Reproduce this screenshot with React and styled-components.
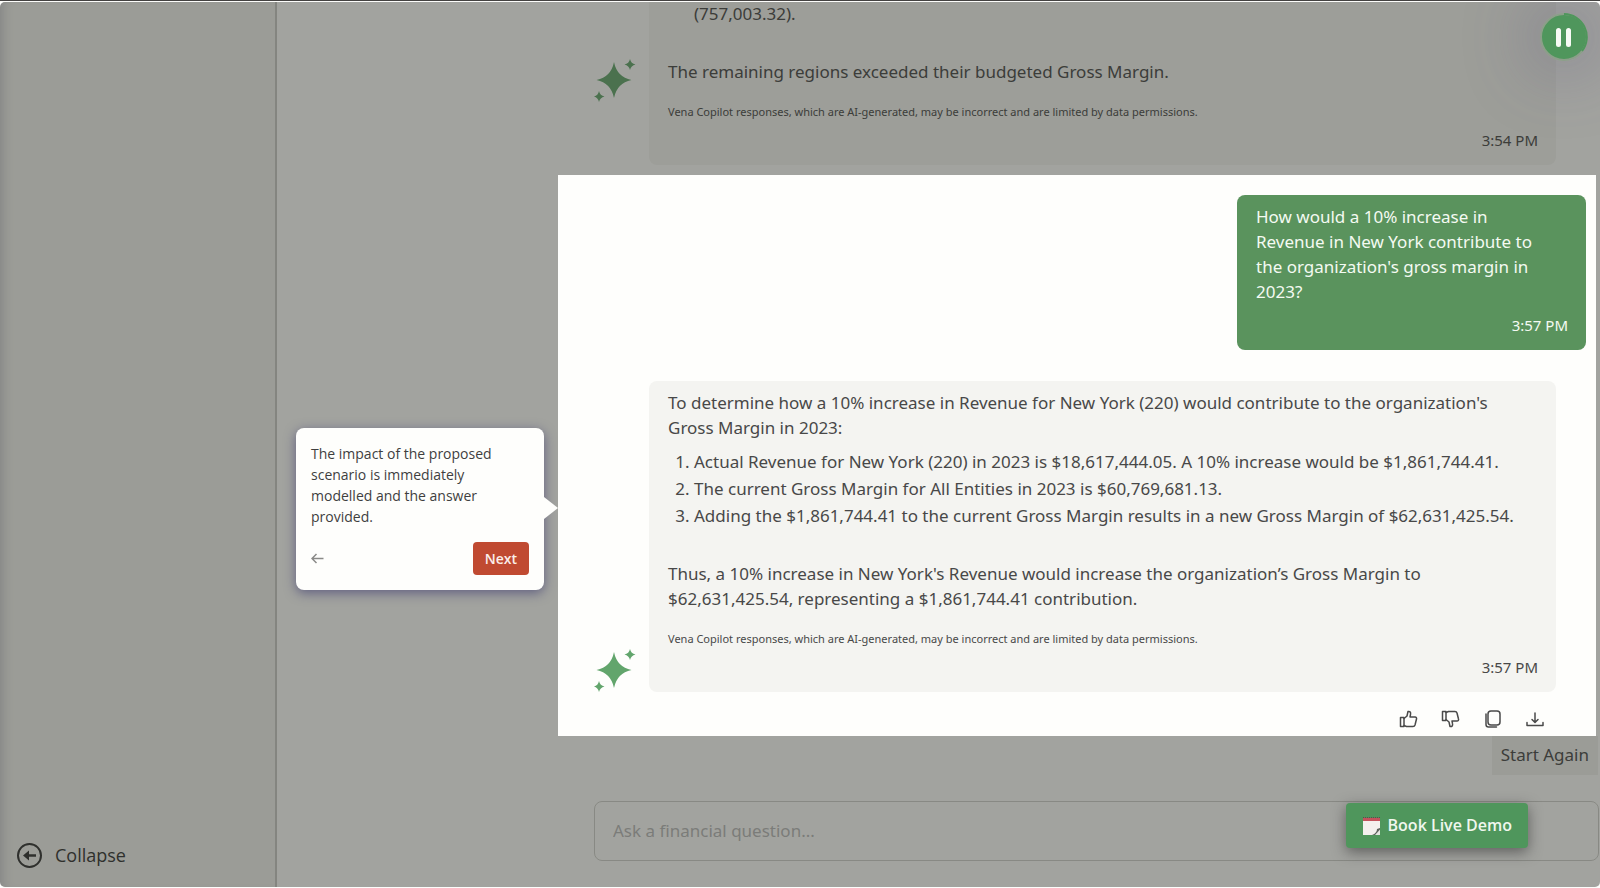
import React, { useState } from "react";
import styled, { createGlobalStyle } from "styled-components";

const GlobalStyle = createGlobalStyle`
  * {
    box-sizing: border-box;
  }
  body {
    margin: 0;
    background: #fdfdfb;
    font-family: "Open Sans", "Noto Sans", sans-serif;
    font-size: 18px;
    line-height: 25px;
    color: #484848;
  }
  button, input {
    font: inherit;
    color: inherit;
  }
  button {
    cursor: pointer;
  }
  p, ol {
    margin: 0;
  }
`;

const Page = styled.div`
  height: 100vh;
  padding: 1px 0;
  border-top: 1px solid #444241;
`;

const Frame = styled.div`
  position: relative;
  display: flex;
  height: 100%;
  overflow: hidden;
  border-radius: 5px;
  background: #fefefc;
`;

const Sidebar = styled.aside`
  display: flex;
  flex: 0 0 277px;
  flex-direction: column;
  justify-content: flex-end;
  padding: 18px 16px;
  background: #f1f1ed;
  border-right: 2px solid #c8c8c4;
  box-shadow: inset 10px 0 12px -8px rgb(90, 90, 120, 0.3);
`;

const CollapseButton = styled.button`
  display: flex;
  align-items: center;
  gap: 12px;
  align-self: flex-start;
  padding: 0;
  border: none;
  background: none;
  color: #303030;
`;

const Main = styled.main`
  display: flex;
  flex: 1;
  flex-direction: column;
  justify-content: flex-end;
  min-width: 0;
  padding-left: 281px;
  font-family: "Noto Sans", "Open Sans", sans-serif;
  font-size: 17px;
`;

const Row = styled.div`
  display: flex;
  align-items: flex-end;
  gap: 12px;
  padding: 0 40px 0 36px;
`;

// the row above the spotlight has no 4px margin of its own
const EarlierRow = styled(Row)`
  padding-right: 44px;
`;

const Avatar = styled.svg`
  flex: 0 0 43px;
  height: 43px;
  margin-bottom: ${(p) => p.$lift || 0}px;
  fill: #62a56c;
`;

const Bubble = styled.article`
  display: flex;
  flex: 1;
  flex-direction: column;
  min-width: 0;
  padding: 9px 18px 14px 19px;
  border-radius: 8px;
  background: #f4f4f1;
`;

const Question = styled(Bubble)`
  flex: 0 0 349px;
  background: #5a935d;
  color: #f4faf2;
`;

const Paragraph = styled.p`
  padding-right: 20px;
`;

const Steps = styled.ol`
  display: flex;
  flex-direction: column;
  gap: 2px;
  margin: 9px 0 33px;
  padding-left: 26px;
`;

const Disclaimer = styled.p`
  margin-top: 20px;
  font-size: 11px;
  line-height: 15px;
`;

const Time = styled.time`
  align-self: flex-end;
  margin-top: 10px;
  font-size: 15px;
  line-height: 22px;
`;

// everything outside of the spotlight is dimmed by its spread shadow
const Spotlight = styled.section`
  position: relative;
  z-index: 1;
  display: flex;
  flex-direction: column;
  margin: 10px 4px 0 0;
  padding: 20px 0 7px;
  background: #fefefc;
  box-shadow: 0 0 0 3000px rgb(45, 47, 40, 0.44);
`;

const QuestionRow = styled.div`
  display: flex;
  justify-content: flex-end;
  margin-bottom: 31px;
  padding-right: 10px;
`;

const Actions = styled.div`
  display: flex;
  justify-content: flex-end;
  gap: 22px;
  margin-top: 17px;
  padding-right: 51px;
`;

const IconButton = styled.button`
  display: flex;
  padding: 0;
  border: none;
  background: none;
`;

const Icon = styled.svg`
  width: 20px;
  height: 20px;
  fill: none;
  stroke: #4a4a4a;
  stroke-width: 1.5;
  stroke-linejoin: round;
  stroke-linecap: round;
`;

const Tooltip = styled.div`
  position: absolute;
  top: 253px;
  right: calc(100% + 14px);
  width: 248px;
  padding: 15px;
  border-radius: 8px;
  background: #fefefc;
  color: #3f3f3f;
  font-family: "Open Sans", "Noto Sans", sans-serif;
  font-size: 14px;
  line-height: 21px;
  box-shadow: 0 3px 12px rgb(60, 58, 110, 0.65);
  &::after {
    content: "";
    position: absolute;
    top: 69px;
    left: 100%;
    border: 11px solid transparent;
    border-left: 14px solid #fefefc;
    border-right: none;
  }
`;

const TooltipFooter = styled.div`
  display: flex;
  align-items: center;
  justify-content: space-between;
  margin-top: 15px;
`;

const NextButton = styled.button`
  height: 33px;
  padding: 0 12px;
  border: none;
  border-radius: 4px;
  background: #c04a31;
  color: #fbeeea;
  font-weight: 600;
`;

const StartAgain = styled.button`
  flex: 0 0 39px;
  align-self: flex-end;
  margin-right: 2px;
  padding: 0 9px 2px;
  border: none;
  background: #f1f1ed;
`;

const AskInput = styled.input`
  flex: 0 0 60px;
  margin: 26px 1px 26px 36px;
  padding: 0 18px 2px;
  border: 1px solid #cfcfcb;
  border-radius: 8px;
  background: transparent;
  &::placeholder {
    color: #b8b8b8;
    opacity: 1;
  }
`;

const DemoButton = styled.button`
  position: absolute;
  right: 72px;
  bottom: 39px;
  z-index: 2;
  display: flex;
  align-items: center;
  gap: 7px;
  height: 45px;
  padding: 0 16px;
  border: none;
  border-radius: 4px;
  background: #4f965c;
  color: #f0f7ee;
  font-size: 16px;
  font-weight: 600;
  box-shadow: 0 4px 14px rgb(50, 50, 50, 0.6);
`;

const PauseButton = styled.button`
  position: absolute;
  top: 11px;
  right: 12px;
  z-index: 2;
  display: flex;
  padding: 0;
  border: none;
  border-radius: 50%;
  background: none;
  box-shadow: 0 0 70px 8px rgb(80, 72, 120, 0.4);
`;

function Sparkles({ lift }) {
  return (
    <Avatar viewBox="0 0 43 43" $lift={lift} aria-hidden="true">
      <path d="M20 3Q23 18 37.500 21Q23 24 20 39Q17 24 2.500 21Q17 18 20 3Z" />
      <path d="M36 0Q37 4.500 41.500 5.500Q37 6.500 36 11Q35 6.500 30.500 5.500Q35 4.500 36 0Z" />
      <path d="M5 32Q6 36.500 10.500 37.500Q6 38.500 5 43Q4 38.500 0 37.500Q4 36.500 5 32Z" />
    </Avatar>
  );
}

function ThumbIcon({ down }) {
  return (
    <Icon viewBox="0 0 20 20">
      <g transform={down ? "matrix(1 0 0 -1 0 20)" : undefined}>
        <path d="M1.500 8.500H5V17.500H1.500Z" />
        <path d="M5 9.500L8 7L9 2.500C11 2 12 3.500 11.500 5.500L11 8H16C17.300 8 17.800 9 17.500 10L16 16C15.700 17 15 17.500 14 17.500H7.500L5 16.500" />
      </g>
    </Icon>
  );
}

const note =
  "Vena Copilot responses, which are AI-generated, may be incorrect and are limited by data permissions.";

function App() {
  const [question, setQuestion] = useState("");

  return (
    <Page>
      <GlobalStyle />
      <Frame>
        <Sidebar>
          <CollapseButton>
            <svg width="27" height="27" viewBox="0 0 27 27" fill="none" stroke="#303030">
              <circle cx="13.500" cy="13.500" r="11.500" strokeWidth="2" />
              <path d="M20 13.500H11" strokeWidth="2.500" />
              <path d="M7 13.500L13 8.500V18.500Z" fill="#303030" stroke="none" />
            </svg>
            Collapse
          </CollapseButton>
        </Sidebar>
        <Main>
          <EarlierRow>
            <Sparkles lift={63} />
            <Bubble>
              <Steps as="div">
                <p>(757,003.32).</p>
              </Steps>
              <Paragraph>The remaining regions exceeded their budgeted Gross Margin.</Paragraph>
              <Disclaimer>{note}</Disclaimer>
              <Time>3:54 PM</Time>
            </Bubble>
          </EarlierRow>
          <Spotlight>
            <QuestionRow>
              <Question>
                <Paragraph>
                  How would a 10% increase in Revenue in New York contribute to the
                  organization's gross margin in 2023?
                </Paragraph>
                <Time>3:57 PM</Time>
              </Question>
            </QuestionRow>
            <Row>
              <Sparkles />
              <Bubble>
                <Paragraph>
                  To determine how a 10% increase in Revenue for New York (220) would
                  contribute to the organization's Gross Margin in 2023:
                </Paragraph>
                <Steps>
                  <li>
                    Actual Revenue for New York (220) in 2023 is $18,617,444.05. A 10%
                    increase would be $1,861,744.41.
                  </li>
                  <li>The current Gross Margin for All Entities in 2023 is $60,769,681.13.</li>
                  <li>
                    Adding the $1,861,744.41 to the current Gross Margin results in a new
                    Gross Margin of $62,631,425.54.
                  </li>
                </Steps>
                <Paragraph>
                  Thus, a 10% increase in New York's Revenue would increase the
                  organization’s Gross Margin to $62,631,425.54, representing a
                  $1,861,744.41 contribution.
                </Paragraph>
                <Disclaimer>{note}</Disclaimer>
                <Time>3:57 PM</Time>
              </Bubble>
            </Row>
            <Actions>
              <IconButton aria-label="Like">
                <ThumbIcon />
              </IconButton>
              <IconButton aria-label="Dislike">
                <ThumbIcon down />
              </IconButton>
              <IconButton aria-label="Copy">
                <Icon viewBox="0 0 20 20">
                  <rect x="5" y="2" width="12" height="14" rx="3" />
                  <path d="M3 5V15.500Q3 18 5.500 18H13.500" />
                </Icon>
              </IconButton>
              <IconButton aria-label="Download">
                <Icon viewBox="0 0 20 20">
                  <path d="M10 4V13M7 10.500L10 13.500L13 10.500M2 13.500V16.500H18V13.500" />
                </Icon>
              </IconButton>
            </Actions>
            <Tooltip role="dialog" aria-label="Tour step">
              <Paragraph>
                The impact of the proposed scenario is immediately modelled and the answer
                provided.
              </Paragraph>
              <TooltipFooter>
                <IconButton aria-label="Back">
                  <svg width="13" height="13" viewBox="0 0 13 13" fill="none" stroke="#8a8a88" strokeWidth="1.500">
                    <path d="M12.500 6.500H1M5.500 2L1 6.500L5.500 11" />
                  </svg>
                </IconButton>
                <NextButton>Next</NextButton>
              </TooltipFooter>
            </Tooltip>
          </Spotlight>
          <StartAgain>Start Again</StartAgain>
          <AskInput
            aria-label="Ask a financial question"
            placeholder="Ask a financial question..."
            value={question}
            onChange={(e) => setQuestion(e.target.value)}
          />
        </Main>
        <PauseButton aria-label="Pause">
          <svg width="48" height="48" viewBox="0 0 48 48">
            <circle cx="24" cy="24" r="23" fill="#4f965c" stroke="#8b9f89" strokeWidth="2" />
            <path d="M24 1A23 23 0 0 1 42 38" fill="none" stroke="#4f965c" strokeWidth="2" />
            <rect x="16" y="15" width="5" height="19" rx="2.500" fill="#f7faf5" />
            <rect x="26" y="15" width="5" height="19" rx="2.500" fill="#f7faf5" />
          </svg>
        </PauseButton>
        <DemoButton>
          <svg width="19" height="20" viewBox="0 0 19 20" aria-hidden="true">
            <path d="M1 3H18V14L12 19H1Z" fill="#f4efee" />
            <path d="M1 2H18V5H1Z" fill="#c4525c" />
            <path d="M1 1.500H18" stroke="#5d4a4c" strokeDasharray="1 1" />
            <path d="M10 19Q15 17 15 13L18 12V19Z" fill="#5c615c" />
            <path d="M13 19L18 13.500V19Z" fill="#e4e4e0" />
          </svg>
          Book Live Demo
        </DemoButton>
      </Frame>
    </Page>
  );
}

export default App;
